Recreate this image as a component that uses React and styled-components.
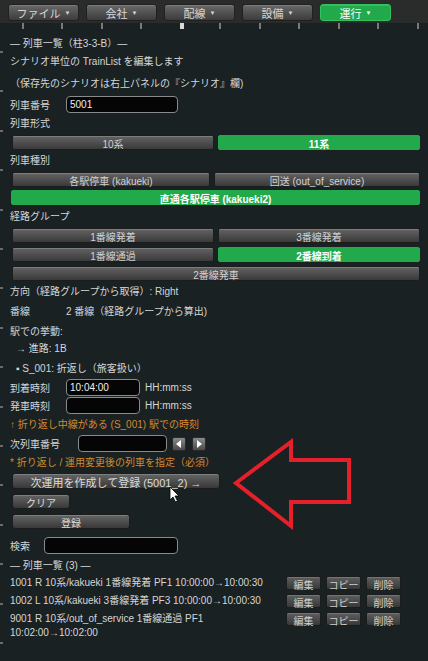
import React from 'react'
import styled, { createGlobalStyle } from 'styled-components'

const GlobalStyle = createGlobalStyle`
  html, body {
    margin: 0;
    padding: 0;
    background: #1a2123;
  }
  body {
    font-family: "Liberation Sans", "Noto Sans CJK JP", sans-serif;
  }
`

const Screen = styled.div`
  position: relative;
  width: 428px;
  height: 661px;
  overflow: hidden;
  color: #d6d6d6;
  font-size: 10px;
  background:
    linear-gradient(#d8d8d8, #d8d8d8) 180px 23px / 4px 6px no-repeat,
    repeating-linear-gradient(90deg, transparent 0 22px, #7a7a7a 22px 24px, transparent 24px 39.5px) 0 23px / 100% 6px no-repeat,
    repeating-linear-gradient(180deg, #6a6a6a 0 2px, transparent 2px 39.4px) 0 51px / 3px 100% no-repeat,
    #1a2123;
`

const MenuBar = styled.div`
  display: flex;
  gap: 7px;
  height: 23px;
  padding: 4px 0 0 8px;
  box-sizing: border-box;
  background: #2a2b2b;
`

const MenuButton = styled.div`
  width: 71px;
  height: 17px;
  box-sizing: border-box;
  display: flex;
  align-items: center;
  justify-content: center;
  gap: 4px;
  border-radius: 3px;
  font-size: 11px;
  color: ${p => (p.$active ? '#ffffff' : '#d8d8d8')};
  background: ${p => (p.$active ? '#22a94c' : 'linear-gradient(#686868, #3c3c3c)')};
  border: 1px solid ${p => (p.$active ? '#31c15e' : '#202020')};
  box-shadow: inset 0 1px 0 rgba(255, 255, 255, 0.15);
`

const Caret = styled.span`
  font-size: 6px;
`

const Panel = styled.div`
  display: flex;
  flex-direction: column;
  padding: 13px 8px 0 10px;
`

const Line = styled.div`
  height: 16px;
  line-height: 16px;
  margin-top: ${p => p.$mt ?? 4}px;
  padding-left: ${p => p.$indent ?? 0}px;
  color: ${p => (p.$note ? '#d3892e' : '#d6d6d6')};
  white-space: nowrap;
`

const Value = styled.span`
  display: inline-block;
  width: ${p => p.$w}px;
`

const ToggleRow = styled.div`
  display: grid;
  grid-template-columns: ${p => p.$cols || '1fr 1fr'};
  gap: 4px;
  margin-top: ${p => p.$mt ?? 3}px;
  padding-left: ${p => p.$pl ?? 2}px;
`

const Toggle = styled.button`
  height: 15px;
  padding: 0;
  box-sizing: border-box;
  font-family: inherit;
  font-size: 10px;
  font-weight: ${p => (p.$on ? 700 : 400)};
  color: ${p => (p.$on ? '#ffffff' : '#d2d2d2')};
  background: ${p => (p.$on ? '#22a94c' : 'linear-gradient(#636363, #3a3a3a)')};
  border: 1px solid ${p => (p.$on ? '#22a94c' : '#1c1c1c')};
  border-radius: 2px;
  box-shadow: ${p => (p.$on ? 'none' : 'inset 0 1px 0 rgba(255,255,255,0.18)')};
`

const FieldRow = styled.div`
  display: flex;
  align-items: center;
  height: ${p => p.$h ?? 18}px;
  margin-top: ${p => p.$mt ?? 2}px;
`

const FieldLabel = styled.span`
  width: ${p => p.$w}px;
  flex-shrink: 0;
`

const TextInput = styled.input`
  width: ${p => p.$w}px;
  height: 17px;
  box-sizing: border-box;
  padding: 0 3px;
  background: #050505;
  border: 1px solid #8a8a8a;
  border-radius: 4px;
  color: #eeeeee;
  font-family: inherit;
  font-size: 10px;
  outline: none;
`

const Hint = styled.span`
  margin-left: 5px;
`

const StepButton = styled.button`
  width: 14px;
  height: 14px;
  margin-left: ${p => p.$ml ?? 5}px;
  padding: 0;
  display: flex;
  align-items: center;
  justify-content: center;
  background: linear-gradient(#8a8a8a, #4a4a4a);
  border: 1px solid #2a2a2a;
  border-radius: 2px;
`

const ActionButton = styled.button`
  width: ${p => p.$w}px;
  height: ${p => p.$h ?? 15}px;
  margin-top: ${p => p.$mt ?? 5}px;
  margin-left: 2px;
  padding: 0;
  box-sizing: border-box;
  font-family: inherit;
  font-size: ${p => p.$fs ?? 10}px;
  color: #dcdcdc;
  background: linear-gradient(#656565, #383838);
  border: 1px solid #1c1c1c;
  border-radius: 3px;
  box-shadow: inset 0 1px 0 rgba(255, 255, 255, 0.18);
`

const ListRow = styled.div`
  display: flex;
  align-items: flex-start;
  gap: 5px;
  padding-right: 19px;
  margin-top: ${p => p.$mt ?? 3}px;
`

const ListText = styled.div`
  flex: 1;
  padding-top: 1px;
  line-height: 14px;
`

const RowActions = styled.div`
  display: flex;
  gap: 5px;
  margin-top: 1px;
`

const SmallButton = styled.button`
  width: 35px;
  height: 14px;
  padding: 0;
  font-family: inherit;
  font-size: 10px;
  color: #cfcfcf;
  background: linear-gradient(#5e5e5e, #383838);
  border: 1px solid #1c1c1c;
  border-radius: 2px;
  box-shadow: inset 0 1px 0 rgba(255, 255, 255, 0.15);
`

const Overlay = styled.svg`
  position: absolute;
  left: 0;
  top: 0;
  pointer-events: none;
`

const menus = ['ファイル', '会社', '配線', '設備', '運行']

const trains = [
  { id: 1, text: '1001 R 10系/kakueki 1番線発着 PF1 10:00:00→10:00:30' },
  { id: 2, text: '1002 L 10系/kakueki 3番線発着 PF3 10:00:00→10:00:30' },
  { id: 3, text: '9001 R 10系/out_of_service 1番線通過 PF1 10:02:00→10:02:00' },
]

function Triangle({ dir }) {
  const pts = dir === 'left' ? '7,2 7,10 2,6' : '3,2 3,10 8,6'
  return (
    <svg width="10" height="12" viewBox="0 0 10 12">
      <polygon points={pts} fill="#ffffff" />
    </svg>
  )
}

export default function App() {
  return (
    <Screen>
      <GlobalStyle />
      <MenuBar>
        {menus.map((m, i) => (
          <MenuButton key={m} $active={i === 4}>
            {m} <Caret>▼</Caret>
          </MenuButton>
        ))}
      </MenuBar>

      <Panel>
        <Line $mt={0}>— 列車一覧（柱3-3-B）—</Line>
        <Line $mt={2}>シナリオ単位の TrainList を編集します</Line>
        <Line $mt={6}>（保存先のシナリオは右上パネルの『シナリオ』欄)</Line>

        <FieldRow $mt={3}>
          <FieldLabel $w={56}>列車番号</FieldLabel>
          <TextInput $w={112} defaultValue="5001" />
        </FieldRow>

        <Line $mt={3}>列車形式</Line>
        <ToggleRow>
          <Toggle>10系</Toggle>
          <Toggle $on>11系</Toggle>
        </ToggleRow>

        <Line $mt={3}>列車種別</Line>
        <ToggleRow $cols="198fr 206fr">
          <Toggle>各駅停車 (kakueki)</Toggle>
          <Toggle>回送 (out_of_service)</Toggle>
        </ToggleRow>
        <ToggleRow $cols="1fr" $pl={1}>
          <Toggle $on>直通各駅停車 (kakueki2)</Toggle>
        </ToggleRow>

        <Line $mt={4}>経路グループ</Line>
        <ToggleRow>
          <Toggle>1番線発着</Toggle>
          <Toggle>3番線発着</Toggle>
        </ToggleRow>
        <ToggleRow $mt={4}>
          <Toggle>1番線通過</Toggle>
          <Toggle $on>2番線到着</Toggle>
        </ToggleRow>
        <ToggleRow $cols="1fr" $mt={4}>
          <Toggle>2番線発車</Toggle>
        </ToggleRow>

        <Line $mt={3}>方向（経路グループから取得）: Right</Line>
        <Line>
          <Value $w={56}>番線</Value>2 番線（経路グループから算出)
        </Line>
        <Line>駅での挙動:</Line>
        <Line $mt={1} $indent={6}>→ 進路: 1B</Line>
        <Line $indent={6}>▪ S_001: 折返し（旅客扱い）</Line>

        <FieldRow $mt={1}>
          <FieldLabel $w={56}>到着時刻</FieldLabel>
          <TextInput $w={74} defaultValue="10:04:00" />
          <Hint>HH:mm:ss</Hint>
        </FieldRow>
        <FieldRow $mt={1} $h={17}>
          <FieldLabel $w={56}>発車時刻</FieldLabel>
          <TextInput $w={74} defaultValue="" />
          <Hint>HH:mm:ss</Hint>
        </FieldRow>

        <Line $mt={3} $note>↑ 折り返し中線がある (S_001) 駅での時刻</Line>

        <FieldRow $mt={2} $h={17}>
          <FieldLabel $w={68}>次列車番号</FieldLabel>
          <TextInput $w={89} defaultValue="" />
          <StepButton>
            <Triangle dir="left" />
          </StepButton>
          <StepButton $ml={6}>
            <Triangle dir="right" />
          </StepButton>
        </FieldRow>

        <Line $mt={3} $note>* 折り返し / 運用変更後の列車を指定（必須）</Line>

        <ActionButton $w={208} $h={16} $mt={2} $fs={11}>
          次運用を作成して登録 (5001_2) →
        </ActionButton>
        <ActionButton $w={58}>クリア</ActionButton>
        <ActionButton $w={118}>登録</ActionButton>

        <FieldRow $mt={8} $h={17}>
          <FieldLabel $w={34}>検索</FieldLabel>
          <TextInput $w={134} defaultValue="" />
        </FieldRow>

        <Line $mt={4}>— 列車一覧 (3) —</Line>

        {trains.map((t, i) => (
          <ListRow key={t.id} $mt={i === 0 ? 1 : 3}>
            <ListText>{t.text}</ListText>
            <RowActions>
              <SmallButton>編集</SmallButton>
              <SmallButton>コピー</SmallButton>
              <SmallButton>削除</SmallButton>
            </RowActions>
          </ListRow>
        ))}
      </Panel>

      <Overlay width="428" height="661" viewBox="0 0 428 661">
        <polygon
          points="236,483 291,442 291,460 349,460 349,502 291,502 291,526"
          fill="none"
          stroke="#e5202b"
          strokeWidth="4"
          strokeLinejoin="miter"
        />
        <path
          d="M170 487 L170 500 L173 497 L175.5 502 L177.5 501 L175 496 L179 496 Z"
          fill="#ffffff"
          stroke="#000000"
          strokeWidth="0.8"
        />
      </Overlay>
    </Screen>
  )
}
